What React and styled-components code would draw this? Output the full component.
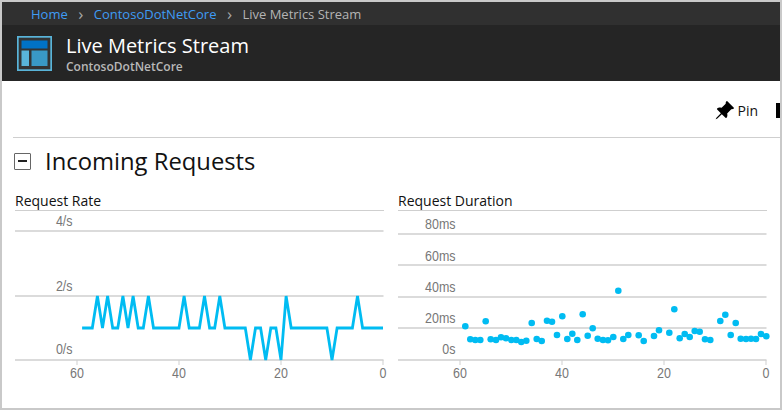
import styled, { createGlobalStyle } from "styled-components";
import { BsPinAngleFill } from "react-icons/bs";

const GlobalStyle = createGlobalStyle`
  html, body {
    margin: 0;
    padding: 0;
    background: #fff;
  }
`;

const SANS = `"Open Sans", "Noto Sans", sans-serif`;
const RATE_SPIKES = { 56: 2, 54: 2, 51: 2, 49: 2, 46: 2, 39: 2, 35: 2, 32: 2, 26: 0, 23: 0, 20: 0, 19: 2, 10: 0, 5: 2 };
const rateLine = [];
for (let s = 59; s >= 0; s--) {
  const v = RATE_SPIKES[s] ?? 1;
  rateLine.push(`${(368 - 5.1 * s).toFixed(1)},${[149, 117, 85][v]}`);
}

// [x, y] on the panel, read off the reference
const DURATION_DOTS = [
  [67.3, 115.3], [72.3, 128.3], [77.3, 129], [82.3, 129], [87.7, 110.3], [92.7, 128.3], [98, 129], [103, 126.3],
  [108, 127.3], [113.3, 129], [118.3, 129], [123.3, 131], [128.3, 129.7], [133.7, 112], [138.7, 128], [143.7, 130],
  [149, 109.7], [154, 110.7], [159, 124], [164.3, 105.3], [169.3, 128], [174.3, 122.7], [179.3, 129], [184.7, 103.3],
  [189.7, 124.7], [194.7, 117.3], [199.7, 127.7], [205, 129], [210, 129.3], [215.3, 126], [220.3, 79.7], [225.3, 128],
  [230.3, 124], [240.7, 124.3], [245.7, 130], [256, 125], [261, 119.3], [271.3, 121.7], [276.3, 98.3], [281.7, 127.3],
  [286.7, 123], [291.7, 126], [296.7, 120], [301.7, 120.7], [307, 128.3], [312.3, 129], [322.3, 110], [327.3, 103.7],
  [332.7, 124], [337.7, 112], [342.7, 127.7], [348, 128], [353, 127.7], [358, 128], [363, 123], [368.3, 125.3],
];

const Frame = styled.div`
  box-sizing: border-box;
  width: 782px;
  height: 410px;
  overflow: hidden;
  border: 2px solid #c9c9c9;
  background: #fff;
  font-family: ${SANS};
`;
const Crumbs = styled.div`
  display: flex;
  align-items: center;
  height: 23px;
  padding-left: 29px;
  background: #303030;
  font-size: 13px;
`;
const CrumbLink = styled.a`
  color: #3f9cf5;
`;
const CrumbCurrent = styled.span`
  color: #b4b4b4;
`;
const Chevron = styled.span`
  width: 26px;
  text-align: center;
  color: #a8a8a8;
  font-size: 17px;
  line-height: 19px;
`;
const Header = styled.div`
  display: flex;
  align-items: center;
  gap: 14px;
  height: 56px;
  padding-left: 15px;
  background: #252525;
`;
const TitleBlock = styled.div`
  display: flex;
  flex-direction: column;
`;
const PageTitle = styled.div`
  color: #fff;
  font-size: 20px;
  line-height: 26px;
`;
const PageSub = styled.div`
  color: #b8b8b8;
  font-size: 12px;
  font-weight: 600;
  line-height: 15px;
`;
const Main = styled.div`
  padding-left: 11px;
`;
const Toolbar = styled.div`
  display: flex;
  align-items: center;
  justify-content: flex-end;
  height: 57px;
  padding-top: 2px;
  box-sizing: border-box;
  border-bottom: 1px solid #cfcfcf;
`;
const PinButton = styled.div`
  display: flex;
  align-items: center;
  gap: 2px;
  margin-right: 18px;
  color: #111;
  font-size: 14px;
`;
const NextTool = styled.div`
  width: 4px;
  height: 15px;
  background: #000;
`;
const SectionHead = styled.div`
  box-sizing: border-box;
  display: flex;
  align-items: center;
  gap: 14px;
  height: 48px;
  padding: 0 0 2px 1px;
`;
const Collapse = styled.div`
  box-sizing: border-box;
  display: flex;
  align-items: center;
  justify-content: center;
  width: 17px;
  height: 17px;
  border: 1.5px solid #666;
  border-radius: 1px;
  &::after {
    content: "";
    width: 9px;
    height: 2px;
    background: #222;
  }
`;
const SectionTitle = styled.div`
  color: #111;
  font-size: 23.8px;
`;
const Charts = styled.div`
  display: grid;
  grid-template-columns: 369px 369px;
  gap: 14px;
  padding-left: 2px;
`;
const ChartTitle = styled.div`
  height: 25px;
  padding-top: 5px;
  line-height: 19px;
  box-sizing: border-box;
  border-bottom: 1px solid #cfcfcf;
  color: #111;
  font-size: 14px;
`;
const Plot = styled.svg`
  display: block;
  width: 369px;
  height: 175px;
  overflow: visible;
`;
const AxisLabel = styled.text`
  font-family: "Liberation Sans", Arial, sans-serif;
  font-size: 14px;
  fill: #777;
  transform-box: fill-box;
  transform-origin: ${(p) => (p.$tick ? "50% 50%" : "100% 50%")};
  transform: scaleX(0.89);
`;

function PanelIcon() {
  return (
    <svg width="35" height="35" viewBox="0 0 35 35">
      <rect x="0" y="0" width="35" height="35" fill="#59b4d9" />
      <rect x="1.7" y="1.7" width="31.6" height="31.6" fill="#333" />
      <rect x="4.5" y="4.5" width="26" height="8" fill="#0072c6" />
      <rect x="4.5" y="14.5" width="7.5" height="15.5" fill="#59b4d9" />
      <rect x="14.5" y="14.5" width="16" height="15.5" fill="#3999c6" />
    </svg>
  );
}

function Axis({ grid, labels }) {
  return (
    <>
      {grid.map((y) => (
        <line key={y} x1="0" x2="368.5" y1={y} y2={y} stroke="#cfcfcf" strokeWidth="1.5" />
      ))}
      {labels.map(([text, y]) => (
        <AxisLabel key={text} x="57.5" y={y} textAnchor="end">
          {text}
        </AxisLabel>
      ))}
      {[60, 40, 20, 0].map((s) => {
        const x = 368 - 5.1 * s;
        return (
          <g key={s}>
            <line x1={x} x2={x} y1="149" y2="154" stroke="#cfcfcf" />
            <AxisLabel $tick x={x} y="167" textAnchor="middle">
              {s}
            </AxisLabel>
          </g>
        );
      })}
    </>
  );
}

function RateChart() {
  return (
    <Plot viewBox="0 0 369 175">
      <Axis grid={[20, 85, 149]} labels={[["4/s", 15], ["2/s", 80], ["0/s", 143]]} />
      <polyline points={rateLine.join(" ")} fill="none" stroke="#00bcf2" strokeWidth="2.8" />
    </Plot>
  );
}

function DurationChart() {
  return (
    <Plot viewBox="0 0 369 175">
      <Axis
        grid={[23, 54, 86, 117, 149]}
        labels={[["80ms", 18], ["60ms", 50], ["40ms", 81], ["20ms", 112], ["0s", 143]]}
      />
      {DURATION_DOTS.map(([x, y]) => (
        <circle key={x} cx={x} cy={y} r="3.3" fill="#00bcf2" />
      ))}
    </Plot>
  );
}

export default function App() {
  return (
    <Frame>
      <GlobalStyle />
      <Crumbs>
        <CrumbLink>Home</CrumbLink>
        <Chevron>›</Chevron>
        <CrumbLink>ContosoDotNetCore</CrumbLink>
        <Chevron>›</Chevron>
        <CrumbCurrent>Live Metrics Stream</CrumbCurrent>
      </Crumbs>
      <Header>
        <PanelIcon />
        <TitleBlock>
          <PageTitle>Live Metrics Stream</PageTitle>
          <PageSub>ContosoDotNetCore</PageSub>
        </TitleBlock>
      </Header>
      <Main>
        <Toolbar>
          <PinButton>
            <BsPinAngleFill size={21} color="#000" />
            Pin
          </PinButton>
          <NextTool />
        </Toolbar>
        <SectionHead>
          <Collapse />
          <SectionTitle>Incoming Requests</SectionTitle>
        </SectionHead>
        <Charts>
          <div>
            <ChartTitle>Request Rate</ChartTitle>
            <RateChart />
          </div>
          <div>
            <ChartTitle>Request Duration</ChartTitle>
            <DurationChart />
          </div>
        </Charts>
      </Main>
    </Frame>
  );
}
